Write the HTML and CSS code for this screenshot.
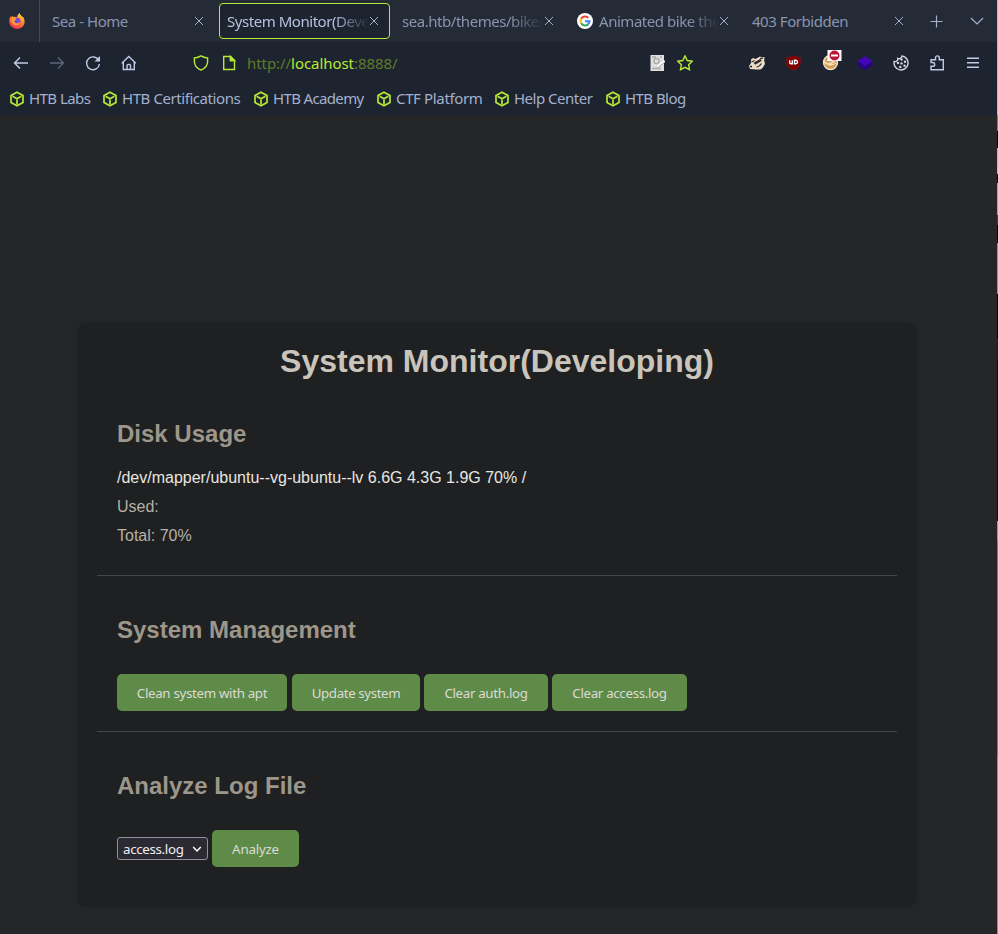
FILE: index.html
```html
<!DOCTYPE html>
<html lang="en">
<head>
<meta charset="utf-8">
<title>System Monitor(Developing)</title>
<link rel="stylesheet" href="styles.css">
</head>
<body>
<svg class="defs" width="0" height="0" aria-hidden="true">
  <defs>
    <symbol id="close" viewBox="0 0 10 10"><path d="M1 1l8 8M9 1L1 9"/></symbol>
    <symbol id="cube" viewBox="0 0 16 16"><path d="M8 1.2l6 3.3v7L8 14.800l-6-3.300v-7zM3.600 5.300L8 7.800l4.400-2.500M8 7.800v5.500"/></symbol>
    <linearGradient id="flame" x1=".8" y1="0" x2=".3" y2="1"><stop offset="0" stop-color="#ffe04a"/><stop offset=".45" stop-color="#ff8a2b"/><stop offset="1" stop-color="#e82a5c"/></linearGradient>
  </defs>
</svg>
<div class="window">
  <header class="chrome">
    <div class="tabs">
      <div class="pinned">
        <svg width="16" height="16" viewBox="0 0 16 16"><path fill="url(#flame)" d="M1.3 3.2l.8 1.3.9-1.8 1 1.1c1.8-.4 3.300 0 4.200.500C7.900 2.800 9.300 1 10.800 0c0 1.800 1.400 2.300 2.600 4l.3-.7c3 4.200 2.300 8.700-.8 11-3 2.300-7.300 2.200-10.100-.2C-.3 11.300-.4 7 1.300 3.200z"/><circle cx="8" cy="8.300" r="3.500" fill="#7548d8"/><path fill="#ff9a2e" d="M2.500 5.500c1.500-1 3.600-.8 5 .7-.7.900-2 1-2.300 2 1.500 3 4.300 2.200 6 .6-.5 3-3.400 4.300-5.900 3.200C3 11 2.100 8.500 2.500 5.500z"/></svg>
      </div>
      <div class="tab"><span class="label">Sea - Home</span><svg class="x" width="10" height="10"><use href="#close"/></svg></div>
      <div class="tab active"><span class="label fade">System Monitor(Deve</span><svg class="x" width="10" height="10"><use href="#close"/></svg></div>
      <div class="tab"><span class="label fade">sea.htb/themes/bike/</span><svg class="x" width="10" height="10"><use href="#close"/></svg></div>
      <div class="tab">
        <svg class="favicon" width="16" height="16" viewBox="0 0 16 16"><circle cx="8" cy="8" r="8" fill="#fff"/><g fill="none" stroke-width="2.100"><path stroke="#ea4335" d="M4.200 5.700A4.500 4.500 0 0 1 11.300 4.800"/><path stroke="#fbbc05" d="M4.200 10.300a4.500 4.500 0 0 1 0-4.600"/><path stroke="#34a853" d="M11 11.400a4.500 4.500 0 0 1-6.800-1.100"/><path stroke="#4285f4" d="M8 8.300h4.500a4.500 4.500 0 0 1-1.500 3.100"/></g></svg>
        <span class="label fade">Animated bike the</span><svg class="x" width="10" height="10"><use href="#close"/></svg></div>
      <div class="tab"><span class="label">403 Forbidden</span><svg class="x" width="10" height="10"><use href="#close"/></svg></div>
      <div class="tabtools">
        <svg width="13" height="13" viewBox="0 0 13 13"><path d="M6.500 .5v12M.5 6.500h12"/></svg>
        <svg width="14" height="14" viewBox="0 0 14 14"><path d="M1 4l6 6 6-6"/></svg>
      </div>
    </div>
    <div class="nav">
      <div class="history">
        <svg width="16" height="16" viewBox="0 0 16 16"><path d="M15 8H1.500M7 2.500L1.500 8 7 13.500"/></svg>
        <svg class="dim" width="16" height="16" viewBox="0 0 16 16"><path d="M1 8h13.500M9 2.500L14.500 8 9 13.500"/></svg>
        <svg width="16" height="16" viewBox="0 0 16 16"><path d="M13.800 5.500A6.400 6.400 0 1 0 14.400 9"/><path fill="#c0cae8" stroke="none" d="M15 1v5.500H9.500z"/></svg>
        <svg width="16" height="16" viewBox="0 0 16 16"><path d="M.8 8.300L7.800 1.500l7 6.800M2.300 7v7.500h11V7M6.100 14.500v-4q0-1 1-1h1.400q1 0 1 1v4"/></svg>
      </div>
      <div class="address">
        <svg width="16" height="16" viewBox="0 0 16 16"><path d="M8 .9c2 1.300 4.200 1.900 6.600 2.100v3.500c0 4-2.600 7-6.600 8.700-4-1.700-6.600-4.700-6.600-8.700V3C3.800 2.800 6 2.200 8 .9z"/></svg>
        <svg width="16" height="16" viewBox="0 0 16 16"><path d="M2.700 1.500h6.800l4 4v9H2.700zM9.500 1.500v4h4"/><path d="M9.500 1.500v4h4z" fill="#b5ea36"/></svg>
        <span class="url">http://<b>localhost</b>:8888/</span>
      </div>
      <div class="marks">
        <svg width="16" height="16" viewBox="0 0 16 16"><path fill="#dfdfdf" stroke="none" d="M1.500 0H15v16H1.500z"/><g stroke="#aaa"><circle cx="7.500" cy="6" r="2.600"/><path d="M3 2h4M11 2h2M3 13.500h9"/></g><path stroke="#aaa" stroke-width="3" d="M8 12l7.500-6"/><path stroke="#fff" stroke-width="2" d="M8 11.500L15.500 5.500"/></svg>
        <svg class="star" width="16" height="16" viewBox="0 0 16 16"><path d="M8 .9l2.200 4.600 5 .7-3.600 3.500.9 5L8 12.300l-4.500 2.400.9-5L.8 6.200l5-.7z"/></svg>
      </div>
      <div class="extensions">
        <svg width="18" height="16" viewBox="0 0 18 16"><path fill="#eadcc8" stroke="none" d="M3 4.500l2-1.500 2.500 1L12 1.500l1.500.8 3-.3-.3 3.500.8 3.500-2.500 4-2 1.500H8l-6-.5-1-3 2-3z"/><g stroke="#2b2926" stroke-width="1.200"><path stroke-width="2.400" d="M6.500 8.800c2-1.800 4-2 6.500-4"/><path d="M3.500 7l3-1.500M8.500 12c1.500 0 3.500-1.500 5-3.500M12 3.500l3-.3"/></g><circle cx="3" cy="11.500" r="1.100" fill="#2b2926" stroke="none"/></svg>
        <svg width="16" height="16" viewBox="0 0 16 16"><path fill="#800000" stroke="#a01414" stroke-width=".5" d="M7.500 .5c2 1.300 4.500 2 6.800 2v5.300c0 4-3.300 6-6.800 7.800C4 13.800.7 11.800.7 7.800V2.500C3 2.500 5.500 1.800 7.500.5z"/><g stroke="#fff" stroke-width="1.400"><path d="M3.700 5.300v2.200q0 1.300 1.300 1.300h1.300V5.300"/><path d="M8.500 5.300v3.500h1.200q1.800 0 1.800-1.700t-1.800-1.800z"/></g></svg>
        <svg class="badge" width="22" height="22" viewBox="0 0 22 22"><circle cx="9.500" cy="13.500" r="7" fill="#d79b51" stroke="#eee4cf"/><path stroke="#f4e2c0" d="M2.500 11c2 5 8 6 13 3M6 11h6M8 15l6-3"/><path fill="#fff" stroke="none" d="M6.500 1h14v11h-14z"/><circle cx="13.500" cy="6.500" r="5" fill="#b81638" stroke="none"/><path stroke="#fff" stroke-width="2" d="M10 6.500h7"/></svg>
        <svg width="16" height="16" viewBox="0 0 16 16"><path fill="#27067e" stroke="none" d="M.5 6L8 10.500 15.500 6v4.500L8 15.500.5 10.500z"/><path fill="#4405b5" stroke="none" d="M8 1l7.500 5L8 11 .5 6z"/></svg>
        <svg class="cookie" width="16" height="16" viewBox="0 0 16 16"><path d="M9 1a7 7 0 1 1-7.800 5.500 2.800 2.800 0 0 0 3.600-3.100A3 3 0 0 0 9 1z"/><g fill="#d5d5dc" stroke="none"><circle cx="8.500" cy="4.500" r="1.200"/><circle cx="5" cy="8" r="1.200"/><circle cx="12" cy="6.800" r="1.200"/><circle cx="8.500" cy="8.400" r="1.200"/><circle cx="11.500" cy="10.800" r="1.200"/><circle cx="7.300" cy="12" r="1.200"/></g></svg>
        <svg width="16" height="16" viewBox="0 0 16 16"><path d="M2 14.800V11.300h1.800a1.900 1.900 0 0 0 0-3.800H2V4.800h4.500V2.800a1.900 1.900 0 0 1 3.800 0v2h4v10z"/></svg>
        <svg width="16" height="16" viewBox="0 0 16 16"><path d="M2 3.300h12M2 7.800h12M2 12.300h12"/></svg>
      </div>
    </div>
    <div class="bookmarks">
      <span class="bm"><svg width="16" height="16"><use href="#cube"/></svg><span class="b1">HTB Labs</span></span>
      <span class="bm"><svg width="16" height="16"><use href="#cube"/></svg><span class="b2">HTB Certifications</span></span>
      <span class="bm"><svg width="16" height="16"><use href="#cube"/></svg><span class="b3">HTB Academy</span></span>
      <span class="bm"><svg width="16" height="16"><use href="#cube"/></svg><span class="b4">CTF Platform</span></span>
      <span class="bm"><svg width="16" height="16"><use href="#cube"/></svg><span class="b5">Help Center</span></span>
      <span class="bm"><svg width="16" height="16"><use href="#cube"/></svg><span class="b6">HTB Blog</span></span>
    </div>
  </header>
  <main class="page">
    <div class="card">
      <h1>System Monitor(Developing)</h1>
      <section class="disk">
        <h2>Disk Usage</h2>
        <p class="bright">/dev/mapper/ubuntu--vg-ubuntu--lv 6.6G 4.3G 1.9G 70% /</p>
        <p>Used:</p>
        <p>Total: 70%</p>
      </section>
      <section>
        <h2>System Management</h2>
        <div class="actions">
          <button class="w1">Clean system with apt</button>
          <button class="w2">Update system</button>
          <button class="w3">Clear auth.log</button>
          <button class="w4">Clear access.log</button>
        </div>
      </section>
      <section>
        <h2>Analyze Log File</h2>
        <div class="actions">
          <div class="select"><span>access.log</span><svg width="10" height="10" viewBox="0 0 10 10"><path d="M1.200 3L5 7l3.800-4"/></svg></div>
          <button class="w5">Analyze</button>
        </div>
      </section>
    </div>
  </main>
</div>
<div class="desktop-edge"></div>
</body>
</html>
```
FILE: styles.css
```css
* { box-sizing: border-box; }
body { margin: 0; background: #252628; overflow: hidden; display: flex; }
.defs { display: block; position: absolute; }
svg { flex: none; fill: none; }
.window { width: 997px; height: 934px; display: flex; flex-direction: column; }
.desktop-edge {
  width: 1px;
  height: 934px;
  background: linear-gradient(#b5bccb 0 115px, #5d7fb8 115px 131px, #000 131px 148px, #a9bedc 148px 174px, #000 174px 183px, #8ca7d0 183px 215px, #29415f 215px 225px, #000 225px 243px, #7299d8 243px 294px, #000 294px 338px, #14202f 338px 360px, #0c1116 360px 521px, #7b9bd0 521px 541px, #a17816 541px 754px, #6f8fc8 754px);
}
.chrome { height: 115px; background: #1d232f; font: 15px/20px "Noto Sans", sans-serif; color: #a4b1cd; white-space: nowrap; }
.tabs { height: 42px; background: #252a37; display: flex; align-items: center; gap: 4px; }
.pinned { width: 40px; height: 42px; border-right: 1px solid #434958; padding: 13px 0 0 9px; }
.tab { width: 171px; height: 36px; padding: 0 11px 0 8px; display: flex; align-items: center; color: #8995ae; letter-spacing: -.46px; }
.tab.active { border: 1px solid #b5ea36; border-radius: 4px; background: #1d232f; padding: 0 10px 0 7px; color: #b5c2df; }
.label { flex: 1; min-width: 0; }
.fade { mask-image: linear-gradient(to right, #000 75%, transparent); }
.favicon { margin-right: 6px; }
.x { stroke: #a4b1cd; stroke-width: 1; }
.tabtools { display: flex; align-items: center; gap: 27px; padding-left: 11px; stroke: #a4b1cd; stroke-width: 1.200; }
.nav { height: 42px; display: flex; align-items: center; stroke: #c0cae8; stroke-width: 1.400; }
.history { display: flex; gap: 20px; padding-left: 13px; width: 193px; }
.dim { opacity: .4; }
.address { display: flex; align-items: center; gap: 12px; width: 456px; stroke: #b5ea36; }
.url { color: #5d7b29; margin-left: -2px; stroke: none; letter-spacing: -.06px; }
.url b { color: #b5ea36; font-weight: 400; }
.marks { display: flex; gap: 12px; width: 99px; }
.star { stroke: #b5ea36; }
.extensions { display: flex; align-items: center; gap: 20px; stroke-width: 1.400; }
.badge { margin: -6px -6px 0 -1px; }
.cookie { stroke: #d5d5dc; }
.bookmarks { height: 29px; display: flex; align-items: center; gap: 12px; padding-left: 9px; }
.bm { display: flex; align-items: center; gap: 4px; }
.bm svg { stroke: #b5ea36; stroke-width: 1.700; }
.bm span { width: 61px; padding-bottom: 2px; letter-spacing: -.55px; }
.bm .b2 { width: 119px; letter-spacing: -.43px; }
.bm .b3 { width: 91px; letter-spacing: -.65px; }
.bm .b4 { width: 86px; letter-spacing: -.35px; }
.bm .b5 { width: 79px; letter-spacing: -.5px; }
.page { flex: 1; padding: 208px 0 0 77px; font: 16px/18px "Liberation Sans", sans-serif; color: #b5b0a8; }
.card { width: 840px; height: 584px; padding: 20px; border-radius: 10px; background: #1f2021; box-shadow: 0 0 10px rgba(0,0,0,.1); }
h1 { margin: 0 0 20px; font-size: 32px; line-height: 37px; text-align: center; color: #c9c4bc; }
section { height: 156px; padding: 40px 20px 0; border-bottom: 1px solid #454648; }
section.disk { height: 176px; padding-top: 20px; }
section:last-child { border: 0; }
h2 { margin: 0 0 30px; font-size: 24px; line-height: 28px; color: #9d968a; }
.disk h2 { margin-bottom: 21px; }
p { margin: 0 0 11px; }
.bright { color: #e8e6e3; }
.actions { display: flex; align-items: center; gap: 4px; font: 13.333px/17px "Noto Sans", sans-serif; letter-spacing: -.33px; }
button { height: 37px; border: 0; border-radius: 5px; padding: 2px 0 0; background: #5e8c48; color: #dcdad7; font: inherit; letter-spacing: inherit; white-space: nowrap; }
.w1 { width: 170px; margin-right: 1px; }
.w2 { width: 128px; letter-spacing: -.4px; }
.w3 { width: 124px; }
.w4 { width: 135px; }
.w5 { width: 87px; letter-spacing: -.2px; }
.select { width: 91px; height: 23px; border: 1px solid #8f8f9d; border-radius: 3px; background: #2b2a33; color: #f0eff2; display: flex; align-items: center; justify-content: space-between; padding: 0 5px; }
.select span { padding-top: 2px; }
.select svg { stroke: #fff; stroke-width: 1.500; }
```
